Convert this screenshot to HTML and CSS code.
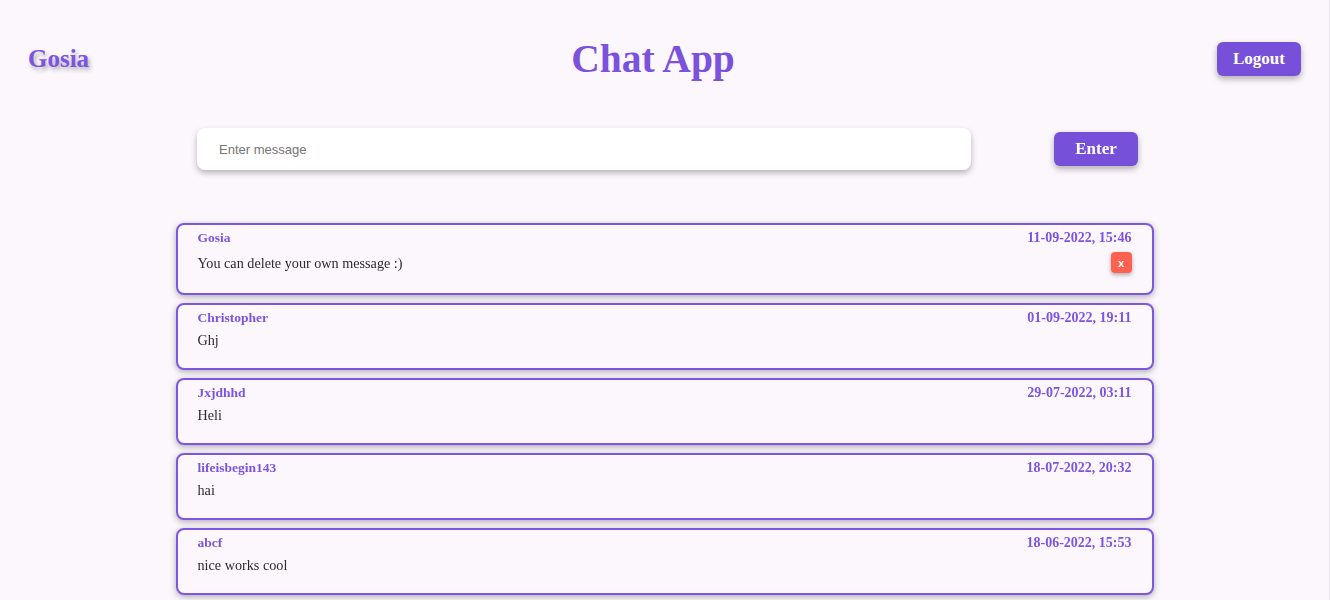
FILE: index.html
```html
<!DOCTYPE html>
<html lang="en">
<head>
<meta charset="utf-8">
<title>Chat App</title>
<link rel="stylesheet" href="styles.css">
</head>
<body>
<div class="page">
  <header class="header">
    <div class="user">Gosia</div>
    <h1 class="title">Chat App</h1>
    <button class="btn logout">Logout</button>
  </header>
  <form class="composer">
    <input class="msg-input" type="text" placeholder="Enter message" autofocus>
    <button class="btn enter" type="button">Enter</button>
  </form>
  <ul class="messages">
    <li class="message">
      <div class="meta"><span class="name">Gosia</span><span class="date">11-09-2022, 15:46</span></div>
      <div class="body"><p class="text">You can delete your own message :)</p><button class="delete" type="button">x</button></div>
    </li>
    <li class="message">
      <div class="meta"><span class="name">Christopher</span><span class="date">01-09-2022, 19:11</span></div>
      <div class="body"><p class="text">Ghj</p></div>
    </li>
    <li class="message">
      <div class="meta"><span class="name">Jxjdhhd</span><span class="date">29-07-2022, 03:11</span></div>
      <div class="body"><p class="text">Heli</p></div>
    </li>
    <li class="message">
      <div class="meta"><span class="name">lifeisbegin143</span><span class="date">18-07-2022, 20:32</span></div>
      <div class="body"><p class="text">hai</p></div>
    </li>
    <li class="message">
      <div class="meta"><span class="name">abcf</span><span class="date">18-06-2022, 15:53</span></div>
      <div class="body"><p class="text">nice works cool</p></div>
    </li>
  </ul>
</div>
</body>
</html>
```
FILE: styles.css
```css
* { box-sizing: border-box; }
html, body { margin: 0; padding: 0; }
body {
  background: #fcf6fd;
  font-family: "Liberation Serif", "DejaVu Serif", serif;
  color: #2b2b2b;
}
.page {
  min-height: 100vh;
  border-right: 1px solid #ece4ee;
  overflow: hidden;
}
.header {
  display: flex;
  justify-content: space-between;
  align-items: center;
  padding: 42px 28px 0 28px;
}
.user {
  font-size: 25px;
  font-weight: bold;
  color: #7b55df;
  text-shadow: 2px 3px 4px rgba(0, 0, 0, 0.3);
}
.title {
  margin: 0;
  font-size: 39.5px;
  font-weight: bold;
  color: #7b52db;
  line-height: 34px;
}
.btn {
  border: none;
  background: #7750da;
  color: #fff;
  font-family: "Liberation Serif", "DejaVu Serif", serif;
  font-weight: bold;
  font-size: 17px;
  border-radius: 6px;
  height: 34px;
  box-shadow: 0 3px 6px rgba(0, 0, 0, 0.3);
  cursor: pointer;
}
.logout { width: 84px; }
.enter { width: 84px; }
.composer {
  display: flex;
  justify-content: space-between;
  align-items: center;
  width: 941px;
  margin: 52px 0 0 197px;
}
.msg-input {
  width: 774px;
  height: 42px;
  border: none;
  border-radius: 8px;
  background: #fff;
  padding: 0 22px;
  font-family: "Liberation Sans", Arial, sans-serif;
  font-size: 13px;
  box-shadow: 0 3px 6px rgba(0, 0, 0, 0.28);
  outline: none;
}
.msg-input::placeholder { color: #757575; }
.messages {
  list-style: none;
  width: 978px;
  margin: 53px auto 0;
  padding: 0;
  display: flex;
  flex-direction: column;
  gap: 8px;
}
.message {
  border: 2px solid #7c58e0;
  border-radius: 8px;
  background: #fcf6fd;
  padding: 5px 20px 20px;
  box-shadow: 0 2px 6px rgba(0, 0, 0, 0.3);
}
.meta {
  display: flex;
  justify-content: space-between;
  align-items: center;
  height: 16px;
  font-size: 13.5px;
  font-weight: bold;
  color: #7b55df;
}
.date { font-size: 14px; }
.body {
  display: flex;
  justify-content: space-between;
  align-items: center;
  margin-top: 6px;
  min-height: 16px;
}
.text {
  margin: 0;
  font-size: 14.2px;
  line-height: 16px;
  color: #2b2b2b;
}
.delete {
  width: 21px;
  height: 21px;
  border: none;
  border-radius: 4px;
  background: #ff6150;
  color: #fff;
  font-family: "Liberation Sans", Arial, sans-serif;
  font-weight: bold;
  font-size: 11px;
  padding: 0;
  box-shadow: 0 2px 4px rgba(0, 0, 0, 0.3);
}
```
